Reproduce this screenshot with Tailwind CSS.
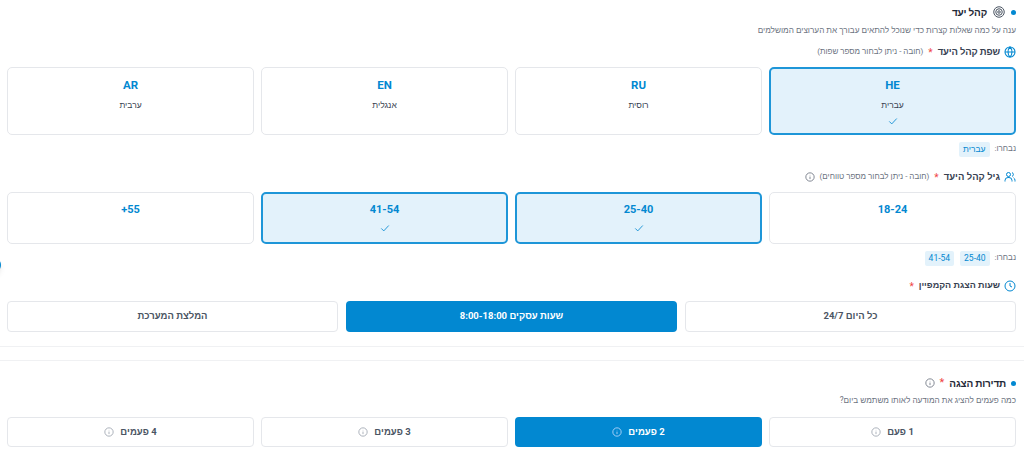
<!DOCTYPE html>
<html lang="he" dir="rtl">
<head>
    <meta charset="UTF-8">
    <meta name="viewport" content="width=device-width, initial-scale=1.0">
    <title>קהל יעד</title>
    <script src="https://cdn.jsdelivr.net/npm/@tailwindcss/browser@4"></script>
</head>
<body class="bg-white overflow-hidden h-[458px] relative font-['Roboto','Liberation_Sans',sans-serif] text-[#374151]">
    <!-- כפתור צף בקצה המסך -->
    <div class="absolute left-[-13px] top-[258px] w-[14px] h-[14px] rounded-full bg-[#0288d1] shadow-md"></div>

    <div class="pr-2 pl-[7px] pt-[3px]">
        <!-- קהל יעד -->
        <div class="h-[18px] flex items-center gap-[6px]">
            <span class="w-[5px] h-[5px] rounded-full bg-[#0288d1]"></span>
            <svg class="w-[12px] h-[12px] text-[#4b5563]" viewBox="0 0 24 24" fill="none" stroke="currentColor" stroke-width="2"><circle cx="12" cy="12" r="10.5"/><circle cx="12" cy="12" r="6.5"/><circle cx="12" cy="12" r="2.5"/></svg>
            <h2 class="text-[10px] tracking-[-0.2px] font-bold text-[#1f2937]">קהל יעד</h2>
        </div>
        <p class="mt-[2px] h-[14px] leading-[14px] text-[8.2px] text-[#6b7280]">ענה על כמה שאלות קצרות כדי שנוכל להתאים עבורך את הערוצים המושלמים</p>

        <div class="mt-[7px] h-[16px] flex items-center gap-[4px]">
            <svg class="w-[12px] h-[12px] text-[#0288d1]" viewBox="0 0 24 24" fill="none" stroke="currentColor" stroke-width="2.2"><circle cx="12" cy="12" r="10"/><path d="M2 12h20M12 2c3 3 4 6.500 4 10s-1 7-4 10c-3-3-4-6.500-4-10s1-7 4-10z"/></svg>
            <span class="text-[9.5px] tracking-[-0.15px] font-bold text-[#374151]">שפת קהל היעד</span>
            <span class="text-[10px] text-[#ef4444] mx-[1px]">*</span>
            <span class="text-[8px] text-[#6b7280]">(חובה - ניתן לבחור מספר שפות)</span>
        </div>

        <div class="mt-[7px] grid grid-cols-4 gap-[7px] h-[68px]">
            <div class="flex flex-col items-center rounded-[5px] border-2 border-[#1e96d8] bg-[#e3f2fb] pt-[9px]">
                <span class="text-[11.5px] leading-[14px] font-bold text-[#0288d1]">HE</span>
                <span class="mt-[7px] text-[8.5px] leading-[12px] text-[#374151]">עברית</span>
                <svg class="mt-[5px] w-[10px] h-[10px] text-[#0288d1]" viewBox="0 0 24 24" fill="none" stroke="currentColor" stroke-width="2"><path d="M3 13l6 6L21 6"/></svg>
            </div>
            <div class="flex flex-col items-center rounded-[5px] border border-[#e5e7eb] bg-white pt-[10px]">
                <span class="text-[11.5px] leading-[14px] font-bold text-[#0288d1]">RU</span>
                <span class="mt-[7px] text-[8.5px] leading-[12px] text-[#374151]">רוסית</span>
            </div>
            <div class="flex flex-col items-center rounded-[5px] border border-[#e5e7eb] bg-white pt-[10px]">
                <span class="text-[11.5px] leading-[14px] font-bold text-[#0288d1]">EN</span>
                <span class="mt-[7px] text-[8.5px] leading-[12px] text-[#374151]">אנגלית</span>
            </div>
            <div class="flex flex-col items-center rounded-[5px] border border-[#e5e7eb] bg-white pt-[10px]">
                <span class="text-[11.5px] leading-[14px] font-bold text-[#0288d1]">AR</span>
                <span class="mt-[7px] text-[8.5px] leading-[12px] text-[#374151]">ערבית</span>
            </div>
        </div>

        <div class="mt-[6px] h-[16px] flex items-center gap-[5px]">
            <span class="text-[8px] text-[#6b7280]">נבחרו:</span>
            <span class="h-[15px] px-[4px] flex items-center rounded-[2px] bg-[#e3f2fb] text-[8.5px] text-[#0288d1]">עברית</span>
        </div>

        <!-- גיל -->
        <div class="mt-[12px] h-[16px] flex items-center gap-[4px]">
            <svg class="w-[12px] h-[12px] text-[#0288d1]" viewBox="0 0 24 24" fill="none" stroke="currentColor" stroke-width="2"><circle cx="9" cy="7" r="4"/><path d="M2 21v-2a6 6 0 0 1 6-6h2a6 6 0 0 1 6 6v2M16 3.200a4 4 0 0 1 0 7.600M19 13.500a6 6 0 0 1 3 5.500v2"/></svg>
            <span class="text-[9.5px] font-bold text-[#374151]">גיל קהל היעד</span>
            <span class="text-[10px] text-[#ef4444] mx-[1px]">*</span>
            <span class="text-[8px] text-[#6b7280]">(חובה - ניתן לבחור מספר טווחים)</span>
            <svg class="w-[10px] h-[10px] mr-[1px] text-[#6b7280]" viewBox="0 0 24 24" fill="none" stroke="currentColor" stroke-width="2"><circle cx="12" cy="12" r="10"/><path d="M12 11v6M12 7v1"/></svg>
        </div>

        <div class="mt-[7px] grid grid-cols-4 gap-[7px] h-[52px]">
            <div class="flex flex-col items-center rounded-[5px] border border-[#e5e7eb] bg-white pt-[10px]">
                <span class="text-[11px] leading-[14px] font-bold text-[#0288d1]" dir="ltr">18-24</span>
            </div>
            <div class="flex flex-col items-center rounded-[5px] border-2 border-[#1e96d8] bg-[#e3f2fb] pt-[9px]">
                <span class="text-[11px] leading-[14px] font-bold text-[#0288d1]" dir="ltr">25-40</span>
                <svg class="mt-[6px] w-[10px] h-[10px] text-[#0288d1]" viewBox="0 0 24 24" fill="none" stroke="currentColor" stroke-width="2"><path d="M3 13l6 6L21 6"/></svg>
            </div>
            <div class="flex flex-col items-center rounded-[5px] border-2 border-[#1e96d8] bg-[#e3f2fb] pt-[9px]">
                <span class="text-[11px] leading-[14px] font-bold text-[#0288d1]" dir="ltr">41-54</span>
                <svg class="mt-[6px] w-[10px] h-[10px] text-[#0288d1]" viewBox="0 0 24 24" fill="none" stroke="currentColor" stroke-width="2"><path d="M3 13l6 6L21 6"/></svg>
            </div>
            <div class="flex flex-col items-center rounded-[5px] border border-[#e5e7eb] bg-white pt-[10px]">
                <span class="text-[11px] leading-[14px] font-bold text-[#0288d1]" dir="ltr">+55</span>
            </div>
        </div>

        <div class="mt-[6px] h-[16px] flex items-center gap-[6px]">
            <span class="text-[8px] text-[#6b7280] -ml-[1px]">נבחרו:</span>
            <span class="h-[15px] px-[4px] flex items-center rounded-[2px] bg-[#e3f2fb] text-[8.5px] text-[#0288d1]" dir="ltr">25-40</span>
            <span class="h-[15px] px-[4px] flex items-center rounded-[2px] bg-[#e3f2fb] text-[8.5px] text-[#0288d1]" dir="ltr">41-54</span>
        </div>

        <!-- שעות -->
        <div class="mt-[12px] h-[16px] flex items-center gap-[4px]">
            <svg class="w-[12px] h-[12px] text-[#0288d1]" viewBox="0 0 24 24" fill="none" stroke="currentColor" stroke-width="2"><circle cx="12" cy="12" r="10"/><path d="M12 6v6l4 2"/></svg>
            <span class="text-[9px] font-bold text-[#374151]">שעות הצגת הקמפיין</span>
            <span class="text-[10px] text-[#ef4444] mx-[1px]">*</span>
        </div>

        <div class="mt-[7px] grid grid-cols-3 gap-[8px] h-[31px]">
            <div class="flex items-center justify-center rounded-[4px] border border-[#e5e7eb] bg-white text-[9.5px] font-bold text-[#4b5563]">כל היום 24/7</div>
            <div class="flex items-center justify-center rounded-[4px] bg-[#0288d1] text-[9.5px] font-bold text-white">שעות עסקים 8:00-18:00</div>
            <div class="flex items-center justify-center rounded-[4px] border border-[#e5e7eb] bg-white text-[9.5px] font-bold text-[#4b5563]">המלצת המערכת</div>
        </div>
    </div>

    <div class="mt-[14px] h-[15px] border-y border-[#f0f1f3]"></div>

    <div class="pr-2 pl-[7px] pt-[13px]">
        <!-- תדירות -->
        <div class="h-[18px] flex items-center gap-[5px]">
            <span class="w-[5px] h-[5px] rounded-full bg-[#0288d1]"></span>
            <h2 class="text-[10px] tracking-[-0.2px] font-bold text-[#1f2937]">תדירות הצגה</h2>
            <span class="text-[11px] text-[#ef4444]">*</span>
            <svg class="w-[10px] h-[10px] text-[#6b7280]" viewBox="0 0 24 24" fill="none" stroke="currentColor" stroke-width="2"><circle cx="12" cy="12" r="10"/><path d="M12 11v6M12 7v1"/></svg>
        </div>
        <p class="mt-[1px] h-[14px] leading-[14px] text-[8.2px] text-[#6b7280]">כמה פעמים להציג את המודעה לאותו משתמש ביום?</p>

        <div class="mt-[10px] grid grid-cols-4 gap-[7px] h-[30px]">
            <div class="flex items-center justify-center gap-[6px] rounded-[4px] border border-[#e5e7eb] bg-white text-[9.5px] font-bold text-[#4b5563]">
                <span>1 פעם</span>
                <svg class="w-[10px] h-[10px] text-[#9ca3af]" viewBox="0 0 24 24" fill="none" stroke="currentColor" stroke-width="2"><circle cx="12" cy="12" r="10"/><path d="M12 11v6M12 7v1"/></svg>
            </div>
            <div class="flex items-center justify-center gap-[6px] rounded-[4px] bg-[#0288d1] text-[9.5px] font-bold text-white">
                <span>2 פעמים</span>
                <svg class="w-[10px] h-[10px] text-[#bfdbfe]" viewBox="0 0 24 24" fill="none" stroke="currentColor" stroke-width="2"><circle cx="12" cy="12" r="10"/><path d="M12 11v6M12 7v1"/></svg>
            </div>
            <div class="flex items-center justify-center gap-[6px] rounded-[4px] border border-[#e5e7eb] bg-white text-[9.5px] font-bold text-[#4b5563]">
                <span>3 פעמים</span>
                <svg class="w-[10px] h-[10px] text-[#9ca3af]" viewBox="0 0 24 24" fill="none" stroke="currentColor" stroke-width="2"><circle cx="12" cy="12" r="10"/><path d="M12 11v6M12 7v1"/></svg>
            </div>
            <div class="flex items-center justify-center gap-[6px] rounded-[4px] border border-[#e5e7eb] bg-white text-[9.5px] font-bold text-[#4b5563]">
                <span>4 פעמים</span>
                <svg class="w-[10px] h-[10px] text-[#9ca3af]" viewBox="0 0 24 24" fill="none" stroke="currentColor" stroke-width="2"><circle cx="12" cy="12" r="10"/><path d="M12 11v6M12 7v1"/></svg>
            </div>
        </div>
    </div>
</body>
</html>
